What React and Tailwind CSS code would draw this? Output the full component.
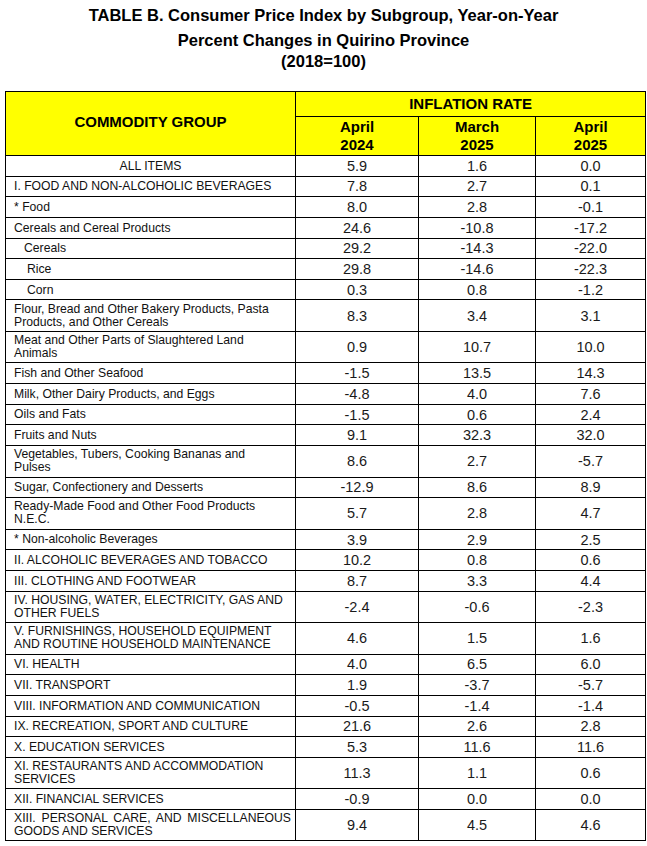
const rows = [
  { label: "ALL ITEMS", v: ["5.9", "1.6", "0.0"], center: true },
  { label: "I. FOOD AND NON-ALCOHOLIC BEVERAGES", v: ["7.8", "2.7", "0.1"] },
  { label: "* Food", v: ["8.0", "2.8", "-0.1"] },
  { label: "Cereals and Cereal Products", v: ["24.6", "-10.8", "-17.2"] },
  { label: "Cereals", v: ["29.2", "-14.3", "-22.0"], indent: 1 },
  { label: "Rice", v: ["29.8", "-14.6", "-22.3"], indent: 2 },
  { label: "Corn", v: ["0.3", "0.8", "-1.2"], indent: 2 },
  { label: ["Flour, Bread and Other Bakery Products, Pasta", "Products, and Other Cereals"], v: ["8.3", "3.4", "3.1"] },
  { label: ["Meat and Other Parts of Slaughtered Land", "Animals"], v: ["0.9", "10.7", "10.0"] },
  { label: "Fish and Other Seafood", v: ["-1.5", "13.5", "14.3"] },
  { label: "Milk, Other Dairy Products, and Eggs", v: ["-4.8", "4.0", "7.6"] },
  { label: "Oils and Fats", v: ["-1.5", "0.6", "2.4"] },
  { label: "Fruits and Nuts", v: ["9.1", "32.3", "32.0"] },
  { label: ["Vegetables, Tubers, Cooking Bananas and", "Pulses"], v: ["8.6", "2.7", "-5.7"] },
  { label: "Sugar, Confectionery and Desserts", v: ["-12.9", "8.6", "8.9"] },
  { label: ["Ready-Made Food and Other Food Products", "N.E.C."], v: ["5.7", "2.8", "4.7"] },
  { label: "* Non-alcoholic Beverages", v: ["3.9", "2.9", "2.5"] },
  { label: "II. ALCOHOLIC BEVERAGES AND TOBACCO", v: ["10.2", "0.8", "0.6"] },
  { label: "III. CLOTHING AND FOOTWEAR", v: ["8.7", "3.3", "4.4"] },
  { label: ["IV. HOUSING, WATER, ELECTRICITY, GAS AND", "OTHER FUELS"], v: ["-2.4", "-0.6", "-2.3"] },
  { label: ["V. FURNISHINGS, HOUSEHOLD EQUIPMENT", "AND ROUTINE HOUSEHOLD MAINTENANCE"], v: ["4.6", "1.5", "1.6"] },
  { label: "VI. HEALTH", v: ["4.0", "6.5", "6.0"] },
  { label: "VII. TRANSPORT", v: ["1.9", "-3.7", "-5.7"] },
  { label: "VIII. INFORMATION AND COMMUNICATION", v: ["-0.5", "-1.4", "-1.4"] },
  { label: "IX. RECREATION, SPORT AND CULTURE", v: ["21.6", "2.6", "2.8"] },
  { label: "X. EDUCATION SERVICES", v: ["5.3", "11.6", "11.6"] },
  { label: ["XI. RESTAURANTS AND ACCOMMODATION", "SERVICES"], v: ["11.3", "1.1", "0.6"] },
  { label: "XII. FINANCIAL SERVICES", v: ["-0.9", "0.0", "0.0"] },
  { label: ["XIII. PERSONAL CARE, AND MISCELLANEOUS", "GOODS AND SERVICES"], v: ["9.4", "4.5", "4.6"], justify: true },
];

const Label = ({ row }) => {
  if (Array.isArray(row.label)) {
    return (
      <div className="leading-[13px]">
        <span className={row.justify ? "block text-justify [text-align-last:justify]" : "block"}>
          {row.label[0]}
        </span>
        <span className="block">{row.label[1]}</span>
      </div>
    );
  }
  return <span className="leading-[14px]">{row.label}</span>;
};

const App = () => {
  return (
    <div className="w-[647px] h-[846px] bg-white text-black font-['Liberation_Sans',Arial,sans-serif] overflow-hidden">
      <div className="pt-[5px] text-center font-bold text-[16.5px] leading-[20px]">
        <p>TABLE B. Consumer Price Index by Subgroup, Year-on-Year</p>
        <p className="mt-[5px]">Percent Changes in Quirino Province</p>
        <p className="mt-[1px]">(2018=100)</p>
      </div>

      <table className="mt-[20px] ml-[5px] w-[640px] table-fixed border-collapse border border-black">
        <colgroup>
          <col className="w-[290px]" />
          <col className="w-[123px]" />
          <col className="w-[117px]" />
          <col className="w-[110px]" />
        </colgroup>
        <thead className="bg-[#ffff00] font-bold text-[15px]">
          <tr className="h-[25px]">
            <th rowSpan={2} className="border border-black align-middle pb-[2px]">
              COMMODITY GROUP
            </th>
            <th colSpan={3} className="border border-black leading-[18px]">
              INFLATION RATE
            </th>
          </tr>
          <tr className="h-[39px]">
            <th className="border border-black leading-[18px]">April<br />2024</th>
            <th className="border border-black leading-[18px]">March<br />2025</th>
            <th className="border border-black leading-[18px]">April<br />2025</th>
          </tr>
        </thead>
        <tbody>
          {rows.map((row, i) => {
            const double = Array.isArray(row.label);
            const pad = row.center
              ? "text-center"
              : row.indent === 1
              ? "pl-[18px] pr-[4px]"
              : row.indent === 2
              ? "pl-[21px] pr-[4px]"
              : "pl-[8px] pr-[4px]";
            return (
              <tr key={i} className={double ? "h-[31.5px]" : "h-[20.65px]"}>
                <td className={`border border-black p-0 align-middle text-[12.2px] text-[#111] ${pad}`}>
                  <Label row={row} />
                </td>
                {row.v.map((n, j) => (
                  <td
                    key={j}
                    className="border border-black p-0 text-center align-middle text-[14.5px] leading-[16px] text-[#1a1a1a]"
                  >
                    {n}
                  </td>
                ))}
              </tr>
            );
          })}
        </tbody>
      </table>
    </div>
  );
};

export default App;
